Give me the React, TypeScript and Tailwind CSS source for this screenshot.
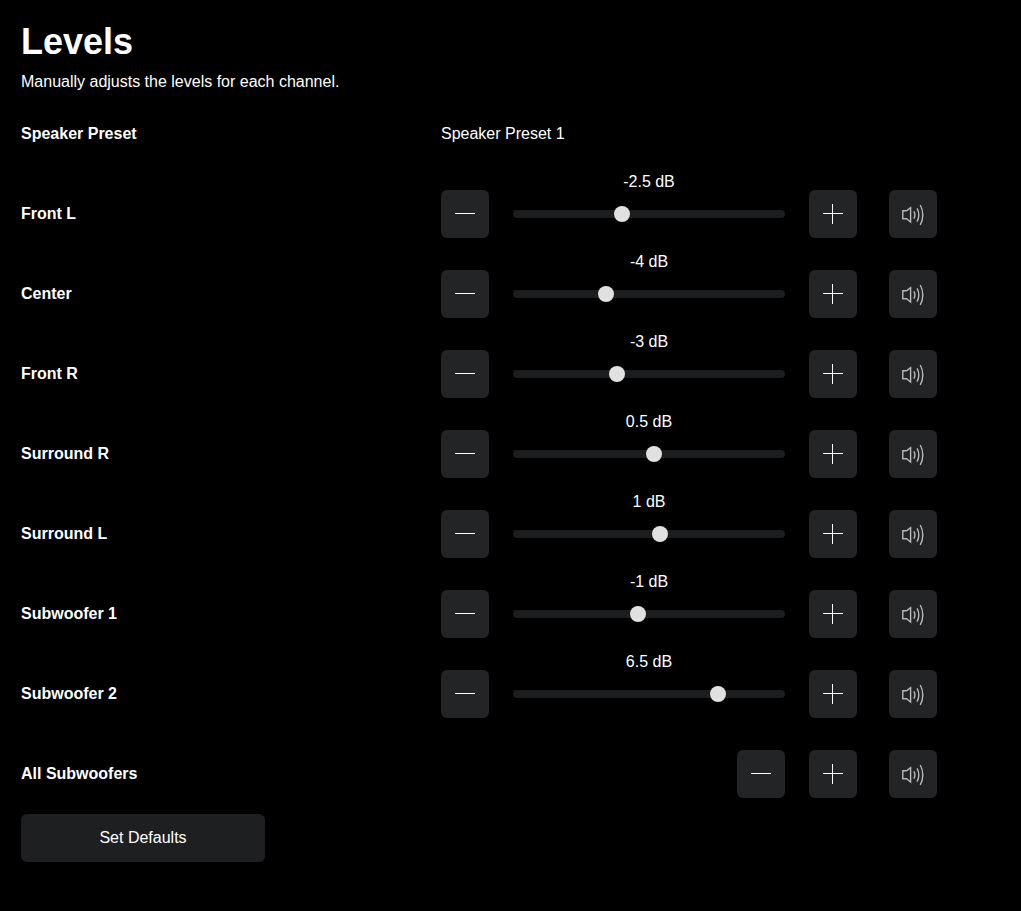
const channels = [
  { name: "Front L", value: "-2.5 dB", x: 109 },
  { name: "Center", value: "-4 dB", x: 93 },
  { name: "Front R", value: "-3 dB", x: 104 },
  { name: "Surround R", value: "0.5 dB", x: 141 },
  { name: "Surround L", value: "1 dB", x: 147 },
  { name: "Subwoofer 1", value: "-1 dB", x: 125 },
  { name: "Subwoofer 2", value: "6.5 dB", x: 205 },
];

function Minus() {
  return (
    <svg width="22" height="22" viewBox="0 0 22 22" fill="#ffffff">
      <rect x="1" y="10" width="20" height="1" />
    </svg>
  );
}

function Plus() {
  return (
    <svg width="22" height="22" viewBox="0 0 22 22" fill="#ffffff">
      <rect x="1" y="10" width="20" height="1" />
      <rect x="10" y="1" width="1" height="20" />
    </svg>
  );
}

function Speaker() {
  return (
    <svg width="24" height="24" viewBox="0 0 24 24" fill="none" stroke="#b8b8b8" strokeWidth="1.4">
      <path d="M1.8 8.8H5.6L9.6 5.6V20L5.6 16.8H1.8Z" />
      <path d="M12.8 9.4C14 11.4 14 14.6 12.8 16.6" />
      <path d="M16 6.4C18.4 10 18.4 16 16 19.6" />
      <path d="M19.2 3C22.6 8.4 22.6 17.6 19.2 23" />
    </svg>
  );
}

function IconButton({ children }: { children: React.ReactNode }) {
  return (
    <button className="flex h-12 w-12 shrink-0 items-center justify-center rounded-md bg-[#232425]">
      {children}
    </button>
  );
}

export default function App() {
  return (
    <div className="min-h-[911px] bg-black pl-[21px] pt-[20px] text-white font-['Liberation_Sans',Arial,sans-serif]">
      <h1 className="text-[36px] font-bold leading-[44px]">Levels</h1>
      <p className="mt-[6px] text-[16px] leading-[24px]">Manually adjusts the levels for each channel.</p>

      <div className="mt-[28px] flex h-6 items-center text-[16px] leading-6">
        <div className="w-[420px] font-bold">Speaker Preset</div>
        <div>Speaker Preset 1</div>
      </div>

      <div className="mt-[23px] flex flex-col gap-[11px]">
        {channels.map((c) => (
          <div key={c.name} className="flex items-end">
            <div className="mb-[1px] flex h-[47px] w-[420px] items-center text-[16px] font-bold">{c.name}</div>
            <IconButton><Minus /></IconButton>
            <div className="mx-6 flex w-[272px] flex-col">
              <div className="h-[21px] text-center text-[16px] leading-[26px]">{c.value}</div>
              <div className="relative flex h-12 items-center">
                <div className="h-2 w-full rounded-full bg-[#1c1d1e]" />
                <div
                  className="absolute top-4 h-4 w-4 -translate-x-1/2 rounded-full bg-[#e1e1e1]"
                  style={{ left: c.x }}
                />
              </div>
            </div>
            <IconButton><Plus /></IconButton>
            <div className="ml-8">
              <IconButton><Speaker /></IconButton>
            </div>
          </div>
        ))}
      </div>

      <div className="mt-[32px] flex items-end">
        <div className="mb-[1px] flex h-[47px] w-[716px] items-center text-[16px] font-bold">All Subwoofers</div>
        <IconButton><Minus /></IconButton>
        <div className="ml-6"><IconButton><Plus /></IconButton></div>
        <div className="ml-8"><IconButton><Speaker /></IconButton></div>
      </div>

      <button className="mt-4 block h-12 w-[244px] rounded-md bg-[#1e1f21] text-center text-[16px] text-white">
        Set Defaults
      </button>
    </div>
  );
}
